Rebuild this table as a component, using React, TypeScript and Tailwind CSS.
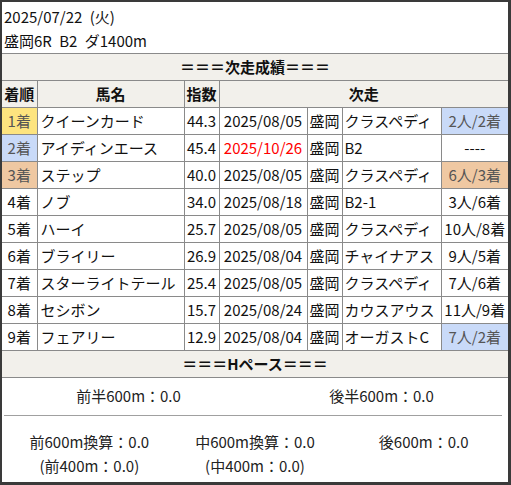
import React from "react";

type Row = {
  rank: string;
  rankBg?: string;
  name: string;
  score: string;
  date: string;
  dateRed?: boolean;
  place: string;
  cls: string;
  result: string;
  resultBg?: string;
};

const rows: Row[] = [
  { rank: "1着", rankBg: "bg-[#fde47f]", name: "クイーンカード", score: "44.3", date: "2025/08/05", place: "盛岡", cls: "クラスペディ", result: "2人/2着", resultBg: "bg-[#c9daf8]" },
  { rank: "2着", rankBg: "bg-[#c9daf8]", name: "アイディンエース", score: "45.4", date: "2025/10/26", dateRed: true, place: "盛岡", cls: "B2", result: "----" },
  { rank: "3着", rankBg: "bg-[#efc8a2]", name: "ステップ", score: "40.0", date: "2025/08/05", place: "盛岡", cls: "クラスペディ", result: "6人/3着", resultBg: "bg-[#efc8a2]" },
  { rank: "4着", name: "ノブ", score: "34.0", date: "2025/08/18", place: "盛岡", cls: "B2-1", result: "3人/6着" },
  { rank: "5着", name: "ハーイ", score: "25.7", date: "2025/08/05", place: "盛岡", cls: "クラスペディ", result: "10人/8着" },
  { rank: "6着", name: "ブライリー", score: "26.9", date: "2025/08/04", place: "盛岡", cls: "チャイナアス", result: "9人/5着" },
  { rank: "7着", name: "スターライトテール", score: "25.4", date: "2025/08/05", place: "盛岡", cls: "クラスペディ", result: "7人/6着" },
  { rank: "8着", name: "セシボン", score: "15.7", date: "2025/08/24", place: "盛岡", cls: "カウスアウス", result: "11人/9着" },
  { rank: "9着", name: "フェアリー", score: "12.9", date: "2025/08/04", place: "盛岡", cls: "オーガストC", result: "7人/2着", resultBg: "bg-[#c9daf8]" },
];

const cell = "border border-[#8a8a8a] p-0 leading-[26px] whitespace-nowrap overflow-hidden";

export default function App() {
  return (
    <div
      className="w-[511px] h-[485px] bg-white border-l-2 border-t-2 border-r-[3px] border-b-[3px] border-[#3a3a3a] text-[15px] text-[#111] overflow-hidden"
      style={{ fontFamily: '"Noto Sans CJK JP", "Noto Sans", sans-serif' }}
    >
      <div className="pt-[3px] pl-[2px] leading-[24px] [word-spacing:4px]">
        <div>2025/07/22 (火)</div>
        <div>盛岡6R B2 ダ1400m</div>
      </div>
      <table className="w-full border-collapse table-fixed">
        <colgroup>
          <col className="w-[35px]" />
          <col className="w-[147px]" />
          <col className="w-[35px]" />
          <col className="w-[88px]" />
          <col className="w-[35px]" />
          <col className="w-[99px]" />
          <col className="w-[67px]" />
        </colgroup>
        <tbody>
          <tr className="bg-[#f2f0eb]">
            <td colSpan={7} className={`${cell} border-x-0 text-center font-bold`}>
              ＝＝＝次走成績＝＝＝
            </td>
          </tr>
          <tr className="bg-[#f2f0eb] font-bold">
            <td className={`${cell} border-l-0 text-center`}>着順</td>
            <td className={`${cell} text-center`}>馬名</td>
            <td className={`${cell} text-center`}>指数</td>
            <td colSpan={4} className={`${cell} border-r-0 text-center`}>次走</td>
          </tr>
          {rows.map((r) => (
            <tr key={r.rank}>
              <td className={`${cell} border-l-0 text-center ${r.rankBg ? `${r.rankBg} text-[#555]` : ""}`}>{r.rank}</td>
              <td className={`${cell} pl-[3px]`}>{r.name}</td>
              <td className={`${cell} text-center`}>{r.score}</td>
              <td className={`${cell} text-center ${r.dateRed ? "text-[#ff0000]" : ""}`}>{r.date}</td>
              <td className={`${cell} text-center`}>{r.place}</td>
              <td className={`${cell} pl-[2px]`}>{r.cls}</td>
              <td className={`${cell} border-r-0 text-center ${r.resultBg ? `${r.resultBg} text-[#555]` : ""}`}>{r.result}</td>
            </tr>
          ))}
          <tr className="bg-[#f2f0eb]">
            <td colSpan={7} className={`${cell} border-x-0 text-center font-bold`}>
              ＝＝＝Hペース＝＝＝
            </td>
          </tr>
        </tbody>
      </table>
      <div className="grid grid-cols-2 h-[37px] items-center text-[#222]">
        <div className="text-center">前半600m：0.0</div>
        <div className="text-center">後半600m：0.0</div>
      </div>
      <div className="ml-[2px] mr-[6px] border-t border-[#a0a0a0]" />
      <div className="grid grid-cols-3 pt-[14px] leading-[24px] text-[#222]">
        <div className="flex flex-col items-center pl-[6px]">
          <div>前600m換算：0.0</div>
          <div>(前400m：0.0)</div>
        </div>
        <div className="flex flex-col items-center">
          <div>中600m換算：0.0</div>
          <div>(中400m：0.0)</div>
        </div>
        <div className="flex flex-col items-center">
          <div>後600m：0.0</div>
        </div>
      </div>
    </div>
  );
}
